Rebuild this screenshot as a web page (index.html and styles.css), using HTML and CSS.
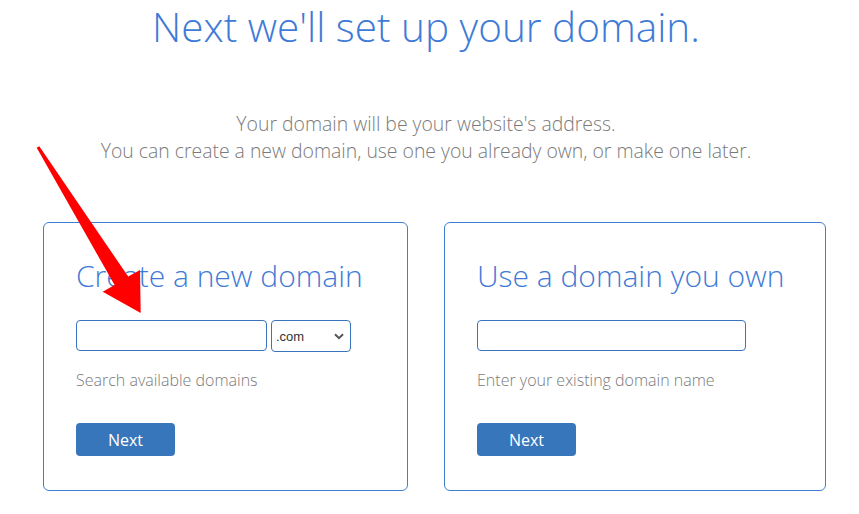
FILE: index.html
```html
<!DOCTYPE html>
<html lang="en">
<head>
<meta charset="utf-8">
<title>Domain setup</title>
<link rel="stylesheet" href="styles.css">
</head>
<body>
<main class="page">
  <h1 class="headline">Next we'll set up your domain.</h1>
  <p class="intro">Your domain will be your website's address.<br>You can create a new domain, use one you already own, or make one later.</p>
  <div class="cards">
    <section class="card card-new">
      <h2 class="card-title">Create a new domain</h2>
      <div class="field-row">
        <input class="text-input input-new" type="text" aria-label="New domain">
        <div class="select-wrap">
          <select class="tld-select" aria-label="Extension">
            <option>.com</option>
          </select>
          <svg class="chevron" width="10" height="7" viewBox="0 0 10 7"><path d="M1 1.2 L5 5.2 L9 1.2" fill="none" stroke="#555" stroke-width="2"/></svg>
        </div>
      </div>
      <p class="hint">Search available domains</p>
      <button class="btn" type="button">Next</button>
    </section>
    <section class="card card-own">
      <h2 class="card-title">Use a domain you own</h2>
      <div class="field-row">
        <input class="text-input input-own" type="text" aria-label="Existing domain">
      </div>
      <p class="hint">Enter your existing domain name</p>
      <button class="btn" type="button">Next</button>
    </section>
  </div>
  <svg class="arrow" width="859" height="514" viewBox="0 0 859 514"><polygon points="36.7,147.8 114.6,285 102.7,291.7 140.7,313 140,270 128.2,276.6 39.3,146.2" fill="#ff0000"/></svg>
</main>
</body>
</html>
```

FILE: styles.css
```css
html, body {
  margin: 0;
  padding: 0;
  background: #ffffff;
}
body {
  font-family: "Open Sans", "Liberation Sans", sans-serif;
  font-weight: 300;
  color: #7a7a7a;
}
.page {
  position: relative;
  box-sizing: border-box;
  width: 859px;
  height: 514px;
  padding-right: 7px;
  overflow: hidden;
}
.headline {
  margin: 0;
  padding-top: 2px;
  font-size: 40.5px;
  line-height: 50px;
  font-weight: 300;
  color: #3f7bd6;
  text-align: center;
}
.intro {
  margin: 58px 0 0;
  font-size: 19.4px;
  line-height: 27px;
  text-align: center;
  color: #7a7a7a;
}
.cards {
  display: flex;
  gap: 36px;
  margin-top: 58px;
  padding-left: 43px;
}
.card {
  box-sizing: border-box;
  flex: none;
  border: 1px solid #3f7fd0;
  border-radius: 6px;
  padding: 35px 32px 34px;
  height: 269px;
}
.card-new { width: 365px; }
.card-own { width: 382px; }
.card-title {
  margin: 0;
  font-size: 30px;
  line-height: 36px;
  font-weight: 300;
  color: #3f7bd6;
  white-space: nowrap;
}
.field-row {
  display: flex;
  gap: 4px;
  margin-top: 26px;
  height: 32px;
}
.text-input {
  box-sizing: border-box;
  height: 31px;
  border: 1px solid #3a74bd;
  border-radius: 4px;
  padding: 0 8px;
  font-family: "Liberation Sans", sans-serif;
  font-size: 13px;
  outline: none;
}
.input-new { width: 191px; }
.input-own { width: 269px; }
.select-wrap {
  position: relative;
  width: 80px;
  height: 32px;
}
.tld-select {
  appearance: none;
  -webkit-appearance: none;
  box-sizing: border-box;
  width: 80px;
  height: 32px;
  border: 1px solid #3a74bd;
  border-radius: 4px;
  background: #ffffff;
  padding: 0 0 0 4px;
  font-family: "Liberation Sans", sans-serif;
  font-size: 13px;
  color: #333333;
  outline: none;
}
.chevron {
  position: absolute;
  right: 7px;
  top: 13px;
  pointer-events: none;
}
.hint {
  margin: 17px 0 0;
  font-size: 16px;
  line-height: 22px;
  color: #7a7a7a;
}
.btn {
  display: block;
  margin-top: 32px;
  width: 99px;
  height: 33px;
  border: 0;
  border-radius: 4px;
  background: #3776ba;
  color: #ffffff;
  font-family: "Open Sans", "Liberation Sans", sans-serif;
  font-weight: 400;
  font-size: 16px;
  padding: 0;
}
.arrow {
  position: absolute;
  left: 0;
  top: 0;
  pointer-events: none;
}
```
